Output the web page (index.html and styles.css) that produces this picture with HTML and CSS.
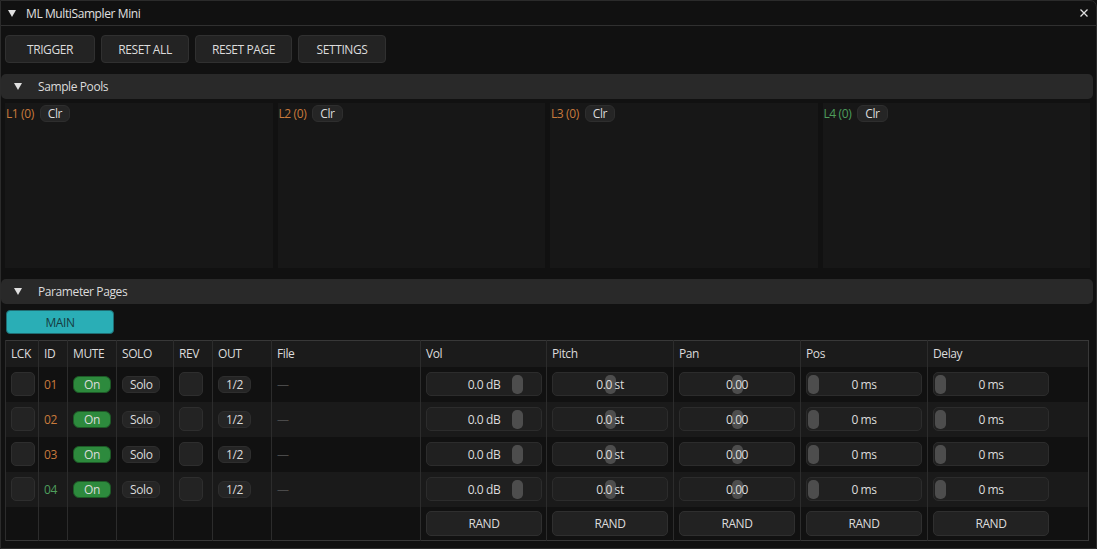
FILE: index.html
```html
<!DOCTYPE html>
<html lang="en">
<head>
<meta charset="UTF-8">
<title>ML MultiSampler Mini</title>
<link rel="stylesheet" href="styles.css">
</head>
<body>
<div class="window">
  <div class="titlebar">
    <svg class="tri" width="8" height="7" viewBox="0 0 8 7"><path d="M0 0H8L4 7Z" fill="#e0e0e0"/></svg>
    <span class="title">ML MultiSampler Mini</span>
    <svg class="close" width="8" height="8" viewBox="0 0 8 8"><path d="M0.5 0.5L7.5 7.5M7.5 0.5L0.5 7.5" stroke="#e0e0e0" stroke-width="1.3"/></svg>
  </div>

  <div class="toolbar">
    <button class="btn w-trigger">TRIGGER</button>
    <button class="btn w-reset">RESET ALL</button>
    <button class="btn w-page">RESET PAGE</button>
    <button class="btn w-settings">SETTINGS</button>
  </div>

  <div class="section">
    <svg class="tri" width="8" height="7" viewBox="0 0 8 7"><path d="M0 0H8L4 7Z" fill="#e0e0e0"/></svg>
    <span>Sample Pools</span>
  </div>

  <div class="pools">
    <div class="pool"><div class="pool-head"><span class="orange">L1 (0)</span><button class="chip">Clr</button></div></div>
    <div class="pool"><div class="pool-head"><span class="orange">L2 (0)</span><button class="chip">Clr</button></div></div>
    <div class="pool"><div class="pool-head"><span class="orange">L3 (0)</span><button class="chip">Clr</button></div></div>
    <div class="pool"><div class="pool-head"><span class="green">L4 (0)</span><button class="chip">Clr</button></div></div>
  </div>

  <div class="section">
    <svg class="tri" width="8" height="7" viewBox="0 0 8 7"><path d="M0 0H8L4 7Z" fill="#e0e0e0"/></svg>
    <span>Parameter Pages</span>
  </div>

  <button class="tab">MAIN</button>

  <table class="params">
    <colgroup>
      <col style="width:33px"><col style="width:29px"><col style="width:49px"><col style="width:57px">
      <col style="width:39px"><col style="width:59px"><col style="width:149px"><col style="width:126px">
      <col style="width:127px"><col style="width:127px"><col style="width:127px"><col>
    </colgroup>
    <tr class="head">
      <th>LCK</th><th>ID</th><th>MUTE</th><th>SOLO</th><th>REV</th><th>OUT</th><th>File</th>
      <th>Vol</th><th>Pitch</th><th>Pan</th><th>Pos</th><th>Delay</th>
    </tr>
    <tr>
      <td><div class="check"></div></td><td class="orange">01</td><td><button class="on">On</button></td><td><button class="chip">Solo</button></td>
      <td><div class="check"></div></td><td><button class="chip">1/2</button></td><td class="dim">—</td>
      <td><div class="slider"><span class="knob right"></span>0.0 dB</div></td>
      <td><div class="slider"><span class="knob mid"></span>0.0 st</div></td>
      <td><div class="slider"><span class="knob mid"></span>0.00</div></td>
      <td><div class="slider"><span class="knob left"></span>0 ms</div></td>
      <td><div class="slider"><span class="knob left"></span>0 ms</div></td>
    </tr>
    <tr class="alt">
      <td><div class="check"></div></td><td class="orange">02</td><td><button class="on">On</button></td><td><button class="chip">Solo</button></td>
      <td><div class="check"></div></td><td><button class="chip">1/2</button></td><td class="dim">—</td>
      <td><div class="slider"><span class="knob right"></span>0.0 dB</div></td>
      <td><div class="slider"><span class="knob mid"></span>0.0 st</div></td>
      <td><div class="slider"><span class="knob mid"></span>0.00</div></td>
      <td><div class="slider"><span class="knob left"></span>0 ms</div></td>
      <td><div class="slider"><span class="knob left"></span>0 ms</div></td>
    </tr>
    <tr>
      <td><div class="check"></div></td><td class="orange">03</td><td><button class="on">On</button></td><td><button class="chip">Solo</button></td>
      <td><div class="check"></div></td><td><button class="chip">1/2</button></td><td class="dim">—</td>
      <td><div class="slider"><span class="knob right"></span>0.0 dB</div></td>
      <td><div class="slider"><span class="knob mid"></span>0.0 st</div></td>
      <td><div class="slider"><span class="knob mid"></span>0.00</div></td>
      <td><div class="slider"><span class="knob left"></span>0 ms</div></td>
      <td><div class="slider"><span class="knob left"></span>0 ms</div></td>
    </tr>
    <tr class="alt">
      <td><div class="check"></div></td><td class="green">04</td><td><button class="on">On</button></td><td><button class="chip">Solo</button></td>
      <td><div class="check"></div></td><td><button class="chip">1/2</button></td><td class="dim">—</td>
      <td><div class="slider"><span class="knob right"></span>0.0 dB</div></td>
      <td><div class="slider"><span class="knob mid"></span>0.0 st</div></td>
      <td><div class="slider"><span class="knob mid"></span>0.00</div></td>
      <td><div class="slider"><span class="knob left"></span>0 ms</div></td>
      <td><div class="slider"><span class="knob left"></span>0 ms</div></td>
    </tr>
    <tr class="rand">
      <td></td><td></td><td></td><td></td><td></td><td></td><td></td>
      <td><button class="rand-btn">RAND</button></td>
      <td><button class="rand-btn">RAND</button></td>
      <td><button class="rand-btn">RAND</button></td>
      <td><button class="rand-btn">RAND</button></td>
      <td><button class="rand-btn">RAND</button></td>
    </tr>
  </table>
</div>
</body>
</html>
```
FILE: styles.css
```css
* { margin: 0; padding: 0; box-sizing: border-box; }
body { background: #111; font: 12px "Open Sans", sans-serif; letter-spacing: -0.4px; color: #dcdcdc; height: 549px; overflow: hidden; }
button { font: inherit; letter-spacing: inherit; color: inherit; cursor: pointer; }

.window { height: 100vh; border: 1px solid #2b2b2b; border-radius: 0 7px 0 0; background: #111; }

.titlebar { height: 25px; display: flex; align-items: center; padding: 0 8px 0 7px; border-bottom: 1px solid #303030; }
.titlebar .title { margin-left: 10px; color: #e0e0e0; }
.titlebar .close { margin-left: auto; }

.toolbar { display: flex; gap: 6px; padding: 9px 0 0 4px; }
.btn { height: 28px; background: #232323; border: 1px solid #303030; border-radius: 4px; }
.w-trigger { width: 90px; }
.w-reset { width: 88px; }
.w-page { width: 97px; }
.w-settings { width: 88px; }

.section { height: 25px; margin: 11px 3px 0 0; display: flex; align-items: center; padding-left: 13px; background: #292929; border-radius: 5px; }
.section span { margin-left: 16px; }

.pools { display: grid; grid-template-columns: repeat(4, 1fr); gap: 5px; height: 165px; margin-top: 4px; padding: 0 6px 0 4px; }
.pool { background: #171717; }
.pool-head { display: flex; align-items: center; gap: 6px; padding: 2px 0 0 1px; }

.orange { color: #c87a3c; }
.green { color: #4e9e5c; }
.dim { color: #4a4a4a; }

.chip { height: 17px; padding: 0 7px; background: #252525; border: 1px solid #2e2e2e; border-radius: 6px; line-height: 15px; }

.tab { display: block; width: 108px; height: 24px; margin: 6px 0 0 5px; background: #2aaeb6; color: #163c3f; border: 1px solid #1f6c72; border-radius: 4px; }

.params { margin: 6px 0 0 4px; width: 1084px; table-layout: fixed; border-collapse: collapse; border: 1px solid #383838; }
.params th, .params td { border-left: 1px solid #2c2c2c; padding: 0 5px; text-align: left; vertical-align: middle; font-weight: normal; white-space: nowrap; }
.params tr { height: 35px; }
.params tr.head { height: 26px; background: #1b1b1b; }
.params tr.alt { background: #1a1a1a; }
.params tr.rand { height: 34px; }

.check { width: 24px; height: 24px; background: #232323; border: 1px solid #2e2e2e; border-radius: 5px; }
.on { height: 17px; padding: 0 10px; background: #2d8a3d; border: 1px solid #1d5a26; border-radius: 6px; line-height: 15px; }

.slider { position: relative; z-index: 0; width: 116px; height: 24px; background: #202020; border: 1px solid #2c2c2c; border-radius: 5px; display: flex; align-items: center; justify-content: center; }
.knob { position: absolute; z-index: -1; top: 2px; width: 11px; height: 19px; background: #4d4d4d; border-radius: 5px; }
.knob.left { left: 1px; }
.knob.mid { left: 52px; }
.knob.right { left: 85px; }

.rand-btn { width: 116px; height: 25px; background: #222; border: 1px solid #2f2f2f; border-radius: 5px; }
```
